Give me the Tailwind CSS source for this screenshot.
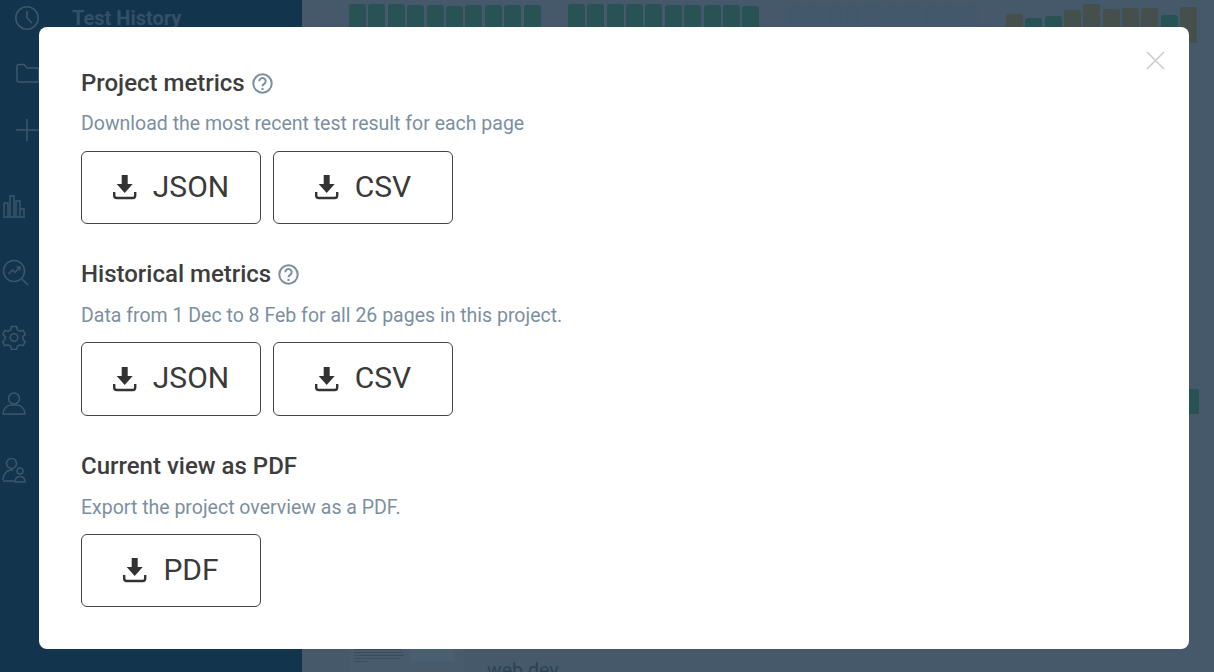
<!DOCTYPE html>
<html lang="en">
<head>
  <meta charset="UTF-8">
  <meta name="viewport" content="width=device-width, initial-scale=1.0">
  <title>Export metrics</title>
  <script src="https://cdn.jsdelivr.net/npm/@tailwindcss/browser@4"></script>
</head>
<body class="h-[672px] w-[1214px] overflow-hidden bg-[#46596a] font-['Roboto',sans-serif]">
  <div class="flex h-[672px]">
    <!-- sidebar, dimmed behind the modal -->
    <aside class="flex h-full w-[302px] shrink-0 bg-[#12344d]">
      <div class="flex w-[54px] shrink-0 flex-col text-[#3b576c]">
        <svg class="ml-[14px] mt-[5px] h-[26px] w-[26px]" viewBox="0 0 26 26" fill="none" stroke="currentColor" stroke-width="1.6"><circle cx="13" cy="13" r="11.2"/><path d="M13 6v7l5 5"/></svg>
        <svg class="ml-[15px] mt-[31px] h-[22px] w-[26px]" viewBox="0 0 26 22" fill="none" stroke="currentColor" stroke-width="1.5"><path d="M2 4.5a2 2 0 0 1 2-2h5l3 3.5h10a2 2 0 0 1 2 2v10a2 2 0 0 1-2 2H4a2 2 0 0 1-2-2z"/></svg>
        <svg class="ml-[14px] mt-[33px] h-[26px] w-[26px]" viewBox="0 0 26 26" fill="none" stroke="currentColor" stroke-width="1.5"><path d="M13 2v22M2 13h24"/></svg>
        <svg class="ml-[2px] mt-[51px] h-[24px] w-[24px]" viewBox="0 0 24 24" fill="none" stroke="currentColor" stroke-width="1.4"><path d="M1 23h22M2 22V9h4v13M8 22V2h4v20M14 22V7h4v15M18 22v-7h4v7"/></svg>
        <svg class="ml-[2px] mt-[41px] h-[27px] w-[27px]" viewBox="0 0 27 27" fill="none" stroke="currentColor" stroke-width="1.5"><circle cx="12" cy="12" r="10.5"/><path d="M20 20l6 6M6.5 15l4-4 2.5 2.5 4.5-5M14.5 8h3.5v3.5"/></svg>
        <svg class="ml-[2px] mt-[39px] h-[25px] w-[24px]" viewBox="0 0 24 25" fill="none" stroke="currentColor" stroke-width="1.5"><path d="M9.500 1.500h5l.8 3.200 2.600 1.500 3.200-.9 2.200 4-2.400 2.200v3l2.400 2.200-2.200 4-3.200-.9-2.600 1.500-.8 3.200h-5l-.8-3.200-2.600-1.500-3.200.9-2.200-4 2.400-2.200v-3L.8 9.300l2.200-4 3.200.9 2.600-1.500z"/><circle cx="12" cy="12.500" r="3.800"/></svg>
        <svg class="ml-[2px] mt-[42px] h-[23px] w-[24px]" viewBox="0 0 24 23" fill="none" stroke="currentColor" stroke-width="1.5"><circle cx="12" cy="6.500" r="5.500"/><path d="M1 22c0-5 4-8.500 7.500-9h7c3.500.5 7.500 4 7.500 9z"/></svg>
        <svg class="ml-[2px] mt-[42px] h-[26px] w-[24px]" viewBox="0 0 24 26" fill="none" stroke="currentColor" stroke-width="1.5"><circle cx="9.500" cy="6.500" r="5"/><path d="M1 23c0-5 3-9 7-10h3M1 24h11"/><circle cx="18" cy="14" r="3"/><path d="M13 25c0-3.500 2-5.500 5-5.500s5 2 5 5.500z"/></svg>
      </div>
      <div class="mt-[5px] ml-[18px] text-[20px] leading-[26px] font-bold text-[#33506a]">Test History</div>
    </aside>

    <!-- page content, dimmed behind the modal -->
    <main class="flex h-full flex-1 flex-col">
      <div class="ml-[24px] flex h-full flex-col border-l border-[#43566a] pl-[22px]">
        <div class="flex h-[43px] items-end">
          <div class="flex h-full items-end gap-[2.400px]">
            <div class="h-[39px] w-[17px] rounded-t-[3px] bg-[#285254]"></div><div class="h-[39px] w-[17px] rounded-t-[3px] bg-[#285254]"></div><div class="h-[39px] w-[17px] rounded-t-[3px] bg-[#285254]"></div><div class="h-[38px] w-[17px] rounded-t-[3px] bg-[#285254]"></div><div class="h-[38px] w-[17px] rounded-t-[3px] bg-[#285254]"></div><div class="h-[37px] w-[17px] rounded-t-[3px] bg-[#285254]"></div><div class="h-[38px] w-[17px] rounded-t-[3px] bg-[#285254]"></div><div class="h-[38px] w-[17px] rounded-t-[3px] bg-[#285254]"></div><div class="h-[38px] w-[17px] rounded-t-[3px] bg-[#285254]"></div><div class="h-[38px] w-[17px] rounded-t-[3px] bg-[#285254]"></div>
          </div>
          <div class="ml-[27.400px] flex h-full items-end gap-[2.400px]">
            <div class="h-[39px] w-[17px] rounded-t-[3px] bg-[#285254]"></div><div class="h-[39px] w-[17px] rounded-t-[3px] bg-[#285254]"></div><div class="h-[39px] w-[17px] rounded-t-[3px] bg-[#285254]"></div><div class="h-[39px] w-[17px] rounded-t-[3px] bg-[#285254]"></div><div class="h-[39px] w-[17px] rounded-t-[3px] bg-[#285254]"></div><div class="h-[38px] w-[17px] rounded-t-[3px] bg-[#285254]"></div><div class="h-[38px] w-[17px] rounded-t-[3px] bg-[#285254]"></div><div class="h-[38px] w-[17px] rounded-t-[3px] bg-[#285254]"></div><div class="h-[38px] w-[17px] rounded-t-[3px] bg-[#285254]"></div><div class="h-[37px] w-[17px] rounded-t-[3px] bg-[#285254]"></div>
          </div>
          <div class="ml-[27.400px] flex h-full items-end gap-[2.400px]">
            <div class="h-[39px] w-[17px] rounded-t-[3px] bg-[#43586a]"></div><div class="h-[39px] w-[17px] rounded-t-[3px] bg-[#43586a]"></div><div class="h-[39px] w-[17px] rounded-t-[3px] bg-[#43586a]"></div><div class="h-[39px] w-[17px] rounded-t-[3px] bg-[#43586a]"></div><div class="h-[39px] w-[17px] rounded-t-[3px] bg-[#43586a]"></div><div class="h-[39px] w-[17px] rounded-t-[3px] bg-[#43586a]"></div><div class="h-[39px] w-[17px] rounded-t-[3px] bg-[#43586a]"></div><div class="h-[39px] w-[17px] rounded-t-[3px] bg-[#43586a]"></div><div class="h-[39px] w-[17px] rounded-t-[3px] bg-[#43586a]"></div><div class="h-[39px] w-[17px] rounded-t-[3px] bg-[#43586a]"></div>
          </div>
          <div class="ml-[27.400px] flex h-full items-end gap-[2.400px]">
            <div class="h-[29px] w-[17px] rounded-t-[3px] bg-[#454f4b]"></div><div class="h-[25px] w-[17px] rounded-t-[3px] bg-[#285254]"></div><div class="h-[27px] w-[17px] rounded-t-[3px] bg-[#285254]"></div><div class="h-[33px] w-[17px] rounded-t-[3px] bg-[#454f4b]"></div><div class="h-[39px] w-[17px] rounded-t-[3px] bg-[#454f4b]"></div><div class="h-[34px] w-[17px] rounded-t-[3px] bg-[#454f4b]"></div><div class="h-[35px] w-[17px] rounded-t-[3px] bg-[#454f4b]"></div><div class="h-[35px] w-[17px] rounded-t-[3px] bg-[#454f4b]"></div><div class="h-[28px] w-[17px] rounded-t-[3px] bg-[#285254]"></div><div class="h-[36px] w-[17px] rounded-t-[3px] bg-[#454f4b]"></div>
          </div>
        </div>
        <div class="ml-[840px] mt-[346px] h-[25px] w-[10px] rounded-tr-[2px] bg-[#285254]"></div>
        <div class="mt-[235px] flex h-[23px]">
          <div class="flex h-full w-[115px] gap-[6px] bg-[#485b6c] pl-[5px]">
            <div class="flex w-[51px] flex-col gap-[2px]">
              <div class="h-px w-[48px] bg-[#3a4d5e]"></div><div class="h-px w-[48px] bg-[#3a4d5e]"></div><div class="h-px w-[50px] bg-[#3a4d5e]"></div><div class="h-px w-[46px] bg-[#3a4d5e]"></div><div class="h-px w-[13px] bg-[#3a4d5e]"></div>
            </div>
            <div class="h-[12px] w-[43px] bg-[#4b5f73]"></div>
          </div>
          <div class="ml-[23px] mt-[10px] text-[19.500px] leading-[24px] text-[#2c4254]">web.dev</div>
        </div>
      </div>
    </main>
  </div>

  <!-- export modal -->
  <div class="fixed left-[39px] top-[27px] h-[622px] w-[1150px] rounded-[8px] bg-white pl-[42px] pt-[41px]">
    <button class="absolute right-[24px] top-[24px] text-[#cccccc]" aria-label="Close">
      <svg class="h-[19px] w-[19px]" viewBox="0 0 19 19" fill="none" stroke="currentColor" stroke-width="1.600"><path d="M1 1l17 17M18 1L1 18"/></svg>
    </button>

    <section class="h-[191px]">
      <h2 class="flex h-[30px] items-center gap-[7px] text-[24px] leading-[30px] font-medium text-[#3d3d3d]">Project metrics
        <svg class="h-[21px] w-[21px] text-[#7d8f9f]" viewBox="0 0 21 21" fill="none"><circle cx="10.500" cy="10.500" r="9.200" stroke="currentColor" stroke-width="2"/><path d="M7.300 8.300a3.200 3.200 0 1 1 5 2.500c-1 .7-1.800 1.200-1.800 2.400" stroke="currentColor" stroke-width="2"/><circle cx="10.500" cy="15.900" r="1.200" fill="currentColor"/></svg>
      </h2>
      <p class="mt-[11px] text-[19.500px] leading-[30px] text-[#7d8f9f]">Download the most recent test result for each page</p>
      <div class="mt-[12px] flex gap-[12px]">
        <button class="flex h-[73px] w-[180px] items-center justify-center gap-[16px] rounded-[6px] border border-[#444444] text-[30px] text-[#3a3a3a]">
          <svg class="h-[25px] w-[24px]" viewBox="0 0 24 25" fill="#333333"><path d="M8.700 0h6v9h5l-8 9-8-9h5z"/><path d="M1.200 17v3.500a2.500 2.500 0 0 0 2.500 2.500h16a2.500 2.500 0 0 0 2.500-2.500V17" fill="none" stroke="#333333" stroke-width="2.400"/></svg>
          <span class="mb-[2px]">JSON</span>
        </button>
        <button class="flex h-[73px] w-[180px] items-center justify-center gap-[16px] rounded-[6px] border border-[#444444] text-[30px] text-[#3a3a3a]">
          <svg class="h-[25px] w-[24px]" viewBox="0 0 24 25" fill="#333333"><path d="M8.700 0h6v9h5l-8 9-8-9h5z"/><path d="M1.200 17v3.500a2.500 2.500 0 0 0 2.500 2.500h16a2.500 2.500 0 0 0 2.500-2.500V17" fill="none" stroke="#333333" stroke-width="2.400"/></svg>
          <span class="mb-[2px]">CSV</span>
        </button>
      </div>
    </section>

    <section class="h-[192px]">
      <h2 class="flex h-[30px] items-center gap-[7px] text-[24px] leading-[30px] font-medium text-[#3d3d3d]">Historical metrics
        <svg class="h-[21px] w-[21px] text-[#7d8f9f]" viewBox="0 0 21 21" fill="none"><circle cx="10.500" cy="10.500" r="9.200" stroke="currentColor" stroke-width="2"/><path d="M7.300 8.300a3.200 3.200 0 1 1 5 2.500c-1 .7-1.800 1.200-1.800 2.400" stroke="currentColor" stroke-width="2"/><circle cx="10.500" cy="15.900" r="1.200" fill="currentColor"/></svg>
      </h2>
      <p class="mt-[12px] text-[19.500px] leading-[30px] text-[#7d8f9f]">Data from 1 Dec to 8 Feb for all 26 pages in this project.</p>
      <div class="mt-[11px] flex gap-[12px]">
        <button class="flex h-[74px] w-[180px] items-center justify-center gap-[16px] rounded-[6px] border border-[#444444] text-[30px] text-[#3a3a3a]">
          <svg class="h-[25px] w-[24px]" viewBox="0 0 24 25" fill="#333333"><path d="M8.700 0h6v9h5l-8 9-8-9h5z"/><path d="M1.200 17v3.500a2.500 2.500 0 0 0 2.500 2.500h16a2.500 2.500 0 0 0 2.500-2.500V17" fill="none" stroke="#333333" stroke-width="2.400"/></svg>
          <span class="mb-[3px]">JSON</span>
        </button>
        <button class="flex h-[74px] w-[180px] items-center justify-center gap-[16px] rounded-[6px] border border-[#444444] text-[30px] text-[#3a3a3a]">
          <svg class="h-[25px] w-[24px]" viewBox="0 0 24 25" fill="#333333"><path d="M8.700 0h6v9h5l-8 9-8-9h5z"/><path d="M1.200 17v3.500a2.500 2.500 0 0 0 2.500 2.500h16a2.500 2.500 0 0 0 2.500-2.500V17" fill="none" stroke="#333333" stroke-width="2.400"/></svg>
          <span class="mb-[3px]">CSV</span>
        </button>
      </div>
    </section>

    <section>
      <h2 class="flex h-[30px] items-center text-[24px] leading-[30px] font-medium text-[#3d3d3d]">Current view as PDF</h2>
      <p class="mt-[12px] text-[19.500px] leading-[30px] text-[#7d8f9f]">Export the project overview as a PDF.</p>
      <div class="mt-[11px] flex gap-[12px]">
        <button class="flex h-[73px] w-[180px] items-center justify-center gap-[16px] rounded-[6px] border border-[#444444] text-[30px] text-[#3a3a3a]">
          <svg class="h-[25px] w-[24px]" viewBox="0 0 24 25" fill="#333333"><path d="M8.700 0h6v9h5l-8 9-8-9h5z"/><path d="M1.200 17v3.500a2.500 2.500 0 0 0 2.500 2.500h16a2.500 2.500 0 0 0 2.500-2.500V17" fill="none" stroke="#333333" stroke-width="2.400"/></svg>
          <span class="mb-[2px]">PDF</span>
        </button>
      </div>
    </section>
  </div>
</body>
</html>
